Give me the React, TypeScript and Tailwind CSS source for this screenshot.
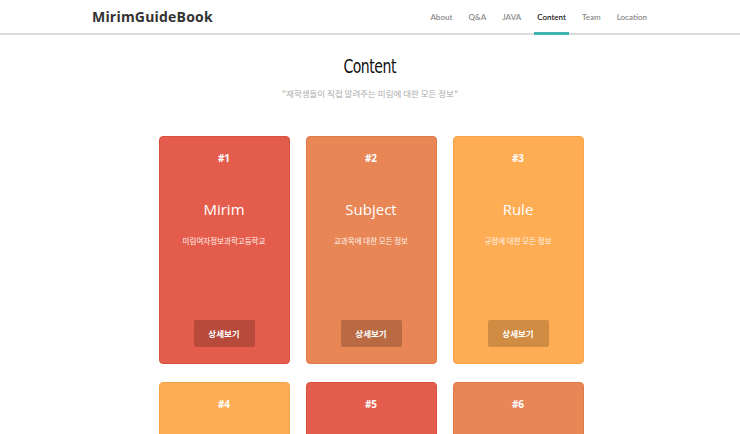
import * as React from 'react';

const cards = [
  { no: '#1', title: 'Mirim', desc: '미림여자정보과학고등학교', bg: 'bg-[#e45c4b]', border: 'border-[#d9503f]', btn: 'bg-[#b84a3c]' },
  { no: '#2', title: 'Subject', desc: '교과목에 대한 모든 정보', bg: 'bg-[#e88656]', border: 'border-[#e07a48]', btn: 'bg-[#b96a42]' },
  { no: '#3', title: 'Rule', desc: '규정에 대한 모든 정보', bg: 'bg-[#fead54]', border: 'border-[#f9a346]', btn: 'bg-[#d08c42]' },
  { no: '#4', title: '', desc: '', bg: 'bg-[#fead54]', border: 'border-[#f9a346]', btn: 'bg-[#d08c42]' },
  { no: '#5', title: '', desc: '', bg: 'bg-[#e45c4b]', border: 'border-[#d9503f]', btn: 'bg-[#b84a3c]' },
  { no: '#6', title: '', desc: '', bg: 'bg-[#e88656]', border: 'border-[#e07a48]', btn: 'bg-[#b96a42]' },
];

const links = ['About', 'Q&A', 'JAVA', 'Content', 'Team', 'Location'];

export default function App() {
  return (
    <div className="min-h-screen bg-white font-['Open_Sans','Noto_Sans_CJK_KR',sans-serif]">
      <header className="h-[35px] border-b-2 border-[#dcdcdc]">
        <div className="mx-auto flex h-full w-[560px] items-center justify-between pl-[2px]">
          <div className="text-[14px] font-bold text-[#333] tracking-[0.2px] pb-[1px]">MirimGuideBook</div>
          <nav className="flex h-full items-stretch gap-[10px] text-[8px] font-['Lato',sans-serif]">
            {links.map((l) => (
              <a
                key={l}
                className={
                  'flex items-center px-[3px] pt-[1px] ' +
                  (l === 'Content'
                    ? 'border-b-[3px] border-[#3fb3b0] font-semibold text-[#222] mb-[-2px]'
                    : 'text-[#8a8a8a] font-semibold')
                }
              >
                {l}
              </a>
            ))}
          </nav>
        </div>
      </header>

      <section className="flex flex-col items-center pt-[17px]">
        <h1 className="font-['DejaVu_Sans',sans-serif] font-stretch-condensed text-[20px] font-normal leading-[28px] tracking-[-0.6px] text-[#111] scale-x-[0.78]">
          Content
        </h1>
        <p className="mt-[7px] text-[8.5px] text-[#aaa] font-['Noto_Sans_CJK_KR',sans-serif]">
          "재학생들이 직접 알려주는 미림에 대한 모든 정보"
        </p>

        <div className="mt-[36px] ml-[2px] grid grid-cols-[131px_131px_131px] gap-x-[16px] gap-y-[18px]">
          {cards.map((c) => (
            <div
              key={c.no}
              className={`flex h-[228px] flex-col items-center rounded-[4px] border ${c.bg} ${c.border} text-white`}
            >
              <div className="mt-[14px] text-[10px] font-bold leading-[14px]">{c.no}</div>
              <div className="mt-[33px] text-[15px] leading-[22px]">{c.title}</div>
              <div className="mt-[15px] text-[7.5px] leading-[12px] font-['Noto_Sans_CJK_KR',sans-serif] text-[#fff5ee]">
                {c.desc}
              </div>
              <div className={`mt-auto mb-[16px] flex h-[27px] w-[61px] items-center justify-center rounded-[2px] ${c.btn} text-[8.5px] font-bold font-['Noto_Sans_CJK_KR',sans-serif]`}>
                상세보기
              </div>
            </div>
          ))}
        </div>
      </section>
    </div>
  );
}
